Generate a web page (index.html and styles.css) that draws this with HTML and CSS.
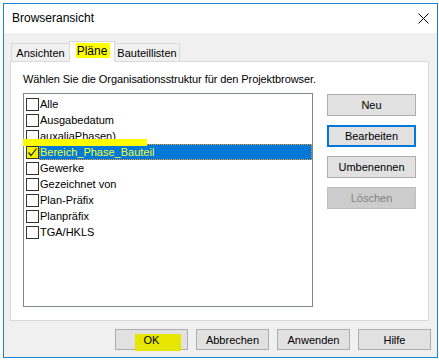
FILE: index.html
```html
<!DOCTYPE html>
<html lang="de">
<head>
<meta charset="utf-8">
<title>Browseransicht</title>
<link rel="stylesheet" href="styles.css">
</head>
<body>
<div class="window">
  <div class="titlebar">
    <span class="title">Browseransicht</span>
    <svg class="close" width="11" height="11" viewBox="0 0 11 11"><path d="M0.5 0.5 L10.5 10.5 M10.5 0.5 L0.5 10.5" stroke="#000" stroke-width="1" fill="none"/></svg>
  </div>
  <div class="body">
    <div class="tabs">
      <div class="tab">Ansichten</div>
      <div class="tab active"><span class="hl"></span><span class="tab-text">Pläne</span></div>
      <div class="tab">Bauteillisten</div>
    </div>
    <div class="panel">
      <div class="intro">Wählen Sie die Organisationsstruktur für den Projektbrowser.</div>
      <div class="panel-main">
        <div class="listbox">
          <div class="item"><span class="cb"></span><span class="label">Alle</span></div>
          <div class="item"><span class="cb"></span><span class="label">Ausgabedatum</span></div>
          <div class="item"><span class="cb"></span><span class="label">auxaliaPhasen)</span></div>
          <div class="item selected">
            <span class="mark"></span>
            <span class="cb checked"><svg width="11" height="11" viewBox="0 0 11 11"><path d="M1.5 5.5 L4 8.5 L9.5 1.5" stroke="#222" stroke-width="1.2" fill="none"/></svg></span><span class="label">Bereich_Phase_Bauteil</span>
          </div>
          <div class="item"><span class="cb"></span><span class="label">Gewerke</span></div>
          <div class="item"><span class="cb"></span><span class="label">Gezeichnet von</span></div>
          <div class="item"><span class="cb"></span><span class="label">Plan-Präfix</span></div>
          <div class="item"><span class="cb"></span><span class="label">Planpräfix</span></div>
          <div class="item"><span class="cb"></span><span class="label">TGA/HKLS</span></div>
        </div>
        <div class="side-buttons">
          <button class="btn">Neu</button>
          <button class="btn default">Bearbeiten</button>
          <button class="btn">Umbenennen</button>
          <button class="btn disabled">Löschen</button>
        </div>
      </div>
    </div>
    <div class="footer">
      <button class="btn foot ok"><span class="hl-ok"></span><span class="btn-text">OK</span></button>
      <button class="btn foot">Abbrechen</button>
      <button class="btn foot">Anwenden</button>
      <button class="btn foot">Hilfe</button>
    </div>
  </div>
</div>
</body>
</html>
```
FILE: styles.css
```css
html, body {
  margin: 0;
  padding: 0;
  background: #ffffff;
}
body {
  font-family: "Liberation Sans", Arial, sans-serif;
  font-size: 11px;
  color: #000;
  width: 439px;
  height: 360px;
  overflow: hidden;
}
.window {
  margin: 3px 0 0 3px;
  width: 435px;
  height: 355px;
  box-sizing: border-box;
  border: 1px solid #1883d7;
  background: #f0f0f0;
  display: flex;
  flex-direction: column;
}
.titlebar {
  height: 29px;
  background: #fff;
  display: flex;
  align-items: center;
  justify-content: space-between;
  padding: 0 7px 0 8px;
  flex: none;
}
.title {
  font-size: 12px;
  margin-top: -1px;
}
.close {
  display: block;
  margin-right: 1px;
}
.body {
  flex: 1;
  display: flex;
  flex-direction: column;
  padding: 8px 0 0 6px;
}
.tabs {
  display: flex;
  align-items: flex-end;
  height: 20px;
  padding-left: 1px;
  position: relative;
  z-index: 1;
}
.tab {
  height: 18px;
  box-sizing: border-box;
  border: 1px solid #d9d9d9;
  border-bottom: none;
  background: #f0f0f0;
  display: flex;
  align-items: center;
  justify-content: center;
  line-height: 14px;
}
.tab:first-child { width: 59px; }
.tab.active {
  width: 46px;
  height: 21px;
  background: #fff;
  margin-left: -1px;
  margin-right: -1px;
  margin-bottom: -1px;
  padding-bottom: 3px;
  position: relative;
}
.tab:last-child { width: 66px; }
.tab.active .hl {
  position: absolute;
  left: 6px;
  top: 1px;
  width: 34px;
  height: 15px;
  background: #ffff00;
}
.tab-text {
  position: relative;
  font-size: 12px;
}
.panel {
  width: 419px;
  height: 260px;
  box-sizing: border-box;
  border: 1px solid #d9d9d9;
  background: #fff;
  padding: 10px 0 0 12px;
  display: flex;
  flex-direction: column;
}
.intro {
  height: 14px;
  line-height: 14px;
  letter-spacing: -0.08px;
}
.panel-main {
  display: flex;
  margin-top: 7px;
}
.listbox {
  width: 290px;
  height: 214px;
  box-sizing: border-box;
  border: 1px solid #828790;
  padding-top: 2px;
  display: flex;
  flex-direction: column;
}
.item {
  height: 16px;
  display: flex;
  align-items: center;
  position: relative;
}
.cb {
  width: 13px;
  height: 13px;
  box-sizing: border-box;
  border: 1px solid #333;
  background: #fff;
  margin-left: 2px;
  flex: none;
  display: flex;
  align-items: center;
  justify-content: center;
}
.cb.checked {
  background: #f4f400;
}
.cb svg { display: block; }
.label {
  padding-left: 1px;
  line-height: 16px;
  height: 16px;
  white-space: nowrap;
}
.item.selected .label {
  flex: 1;
  background: #0078d7;
  color: #f0ff30;
  outline: 1px dotted #f0a030;
  outline-offset: -1px;
}
.mark {
  position: absolute;
  left: -1px;
  top: -5px;
  width: 124px;
  height: 7px;
  background: #ffff00;
}
.side-buttons {
  display: flex;
  flex-direction: column;
  gap: 9px;
  margin: 1px 0 0 14px;
}
.btn {
  font-family: inherit;
  font-size: 11px;
  color: #000;
  background: #e1e1e1;
  border: 1px solid #adadad;
  box-sizing: border-box;
  width: 89px;
  height: 22px;
  padding: 0;
  margin: 0;
  display: flex;
  align-items: center;
  justify-content: center;
}
.btn.default {
  border: 2px solid #0078d7;
}
.btn.disabled {
  background: #cccccc;
  border-color: #bfbfbf;
  color: #838383;
}
.footer {
  display: flex;
  justify-content: flex-end;
  gap: 8px;
  padding: 8px 6px 0 0;
}
.btn.foot {
  width: 73px;
  height: 21px;
}
.btn.ok {
  position: relative;
}
.hl-ok {
  position: absolute;
  left: 19px;
  top: 4px;
  width: 46px;
  height: 17px;
  background: #e6e600;
}
.btn-text {
  position: relative;
}
```
